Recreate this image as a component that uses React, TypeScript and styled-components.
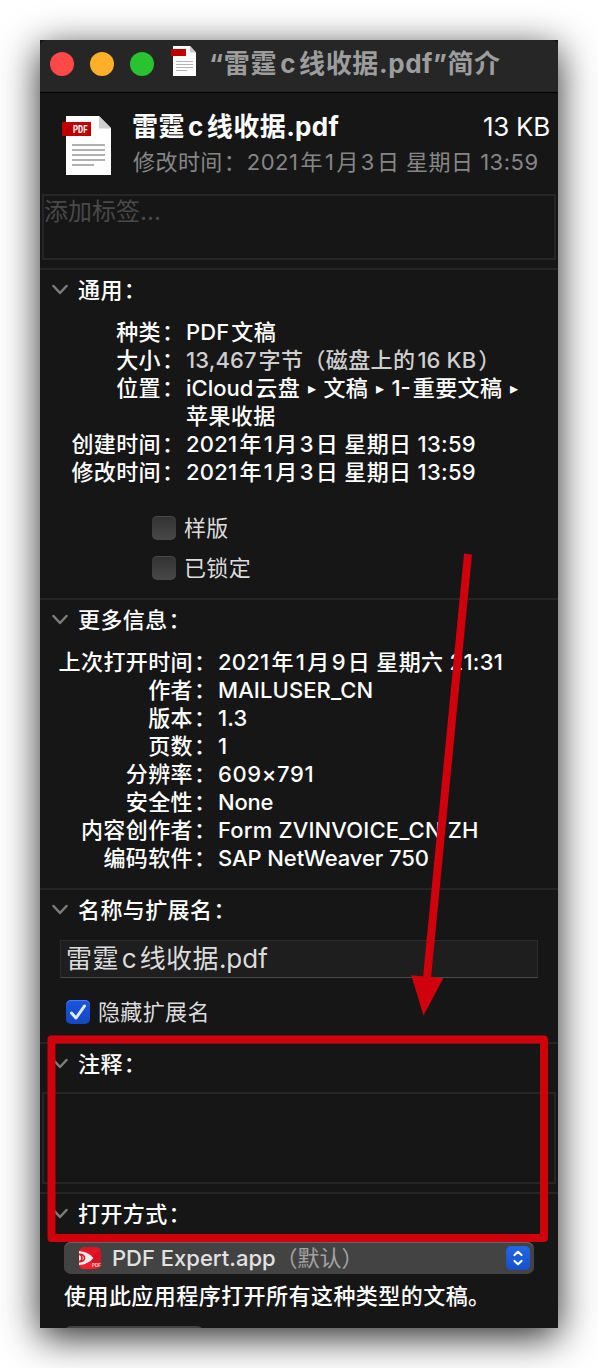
import React from "react";
import styled, { createGlobalStyle } from "styled-components";

const Global = createGlobalStyle`
  * { box-sizing: border-box; }
  body { margin: 0; background: #fff; }
`;

const Page = styled.div`
  position: relative;
  width: 598px;
  height: 1368px;
  padding: 40px;
  overflow: hidden;
  font-family: Inter, "Noto Sans CJK SC", sans-serif;
  font-size: 22px;
  line-height: 28px;
  color: #fff;
`;

const Window = styled.main`
  width: 518px;
  height: 1288px;
  background: #161616;
  box-shadow: 0 9px 36px rgba(0, 0, 0, 0.85);
`;

const Clip = styled.div`
  height: 100%;
  overflow: hidden;
`;

const TitleBar = styled.header`
  display: flex;
  align-items: flex-start;
  height: 53px;
  background: #262626;
  border-bottom: 1px solid #000;
  border-radius: 6px 6px 0 0;
`;

const Lights = styled.div`
  display: flex;
  gap: 16px;
  padding: 12px 0 0 10px;
`;

const Light = styled.span<{ $color: string }>`
  width: 24px;
  height: 24px;
  border-radius: 50%;
  background: ${(p) => p.$color};
`;

const SmallDoc = styled.svg`
  margin: 6px 0 0 17px;
  flex: none;
`;

const Title = styled.h1`
  margin: 10px 0 0 12px;
  font-size: 26px;
  line-height: 28px;
  font-weight: 700;
  color: #9d9d9d;
  white-space: nowrap;
`;

const Summary = styled.section`
  display: flex;
  height: 101px;
  padding: 19px 8px 0 22px;
`;

const SummaryText = styled.div`
  flex: 1;
  margin-left: 20px;
`;

const SummaryTop = styled.div`
  display: flex;
  justify-content: space-between;
  font-size: 26px;
  line-height: 30px;
  height: 36px;
`;

const FileName = styled.strong`
  font-weight: 700;
`;

const Modified = styled.div`
  padding-left: 1px;
  color: #868686;
  white-space: nowrap;
`;

const Box = styled.div<{ $h: number }>`
  height: ${(p) => p.$h}px;
  margin: 0 2px 8px;
  border: 2px solid #262626;
  font-size: 24px;
  line-height: 32px;
  color: #494949;
`;

const Section = styled.section<{ $h?: number }>`
  height: ${(p) => (p.$h ? p.$h + "px" : "auto")};
  border-top: 2px solid #252525;
`;

const Heading = styled.h2`
  display: flex;
  align-items: center;
  gap: 10px;
  height: 40px;
  margin: 0;
  padding-left: 12px;
  font-size: 22px;
  font-weight: 500;
  white-space: nowrap;
`;

const Rows = styled.dl<{ $label: number }>`
  display: grid;
  grid-template-columns: ${(p) => p.$label}px 1fr;
  column-gap: 3px;
  margin: 8px 0 0;
  white-space: nowrap;
`;

const Label = styled.dt`
  text-align: right;
  font-weight: 500;
`;

const Value = styled.dd<{ $dim?: boolean }>`
  margin: 0;
  font-weight: 500;
  color: ${(p) => (p.$dim ? "#cfcfcf" : "#fff")};
`;

const Run = styled.span<{ $ls: number; $l: number; $r: number }>`
  letter-spacing: ${(p) => p.$ls}px;
  margin-left: ${(p) => p.$l}px;
  margin-right: ${(p) => p.$r}px;
`;

const Colon = styled.span`
  margin: 0 -1px 0 1px;
`;

const Arrow = styled.span`
  display: inline-block;
  width: 11.5px;
  font-size: 16px;
  line-height: 20px;
  text-align: center;
  vertical-align: 2px;
`;

const Checks = styled.div<{ $left: number; $top: number }>`
  display: grid;
  gap: 16px;
  padding: ${(p) => p.$top}px 0 0 ${(p) => p.$left}px;
`;

const Check = styled.label`
  display: flex;
  align-items: center;
  gap: 8px;
  height: 24px;
  color: #dcdcdc;
  letter-spacing: 0.35px;
`;

const Tick = styled.span<{ $on?: boolean }>`
  display: flex;
  width: 24px;
  height: 24px;
  border-radius: 5px;
  background: ${(p) => (p.$on ? "linear-gradient(#1a56e0, #1447c4)" : "linear-gradient(#323232, #484848)")};
  box-shadow: inset 0 1px 0 ${(p) => (p.$on ? "#4a7cf0" : "#484848")};
`;

const NameField = styled.div`
  height: 38px;
  margin: 10px 20px 0;
  padding-left: 5px;
  background: #1e1e1e;
  border: 1px solid #2c2c2c;
  border-bottom-color: #4a4a4a;
  font-size: 26px;
  line-height: 36px;
  color: #dcdcdc;
`;

const Popup = styled.div`
  display: flex;
  align-items: center;
  height: 32px;
  margin: 8px 24px 0;
  padding: 0 4px 0 14px;
  border-radius: 7px;
  background: #434343;
  box-shadow: inset 0 1px 0 #666;
  color: #e2e2e2;
  font-weight: 500;
  white-space: nowrap;
`;

const Default = styled.span`
  color: #a4a4a4;
  font-weight: 400;
`;

const AppName = styled.span`
  margin-left: 10px;
`;

const Stepper = styled.span`
  display: flex;
  width: 24px;
  height: 24px;
  margin-left: auto;
  border-radius: 5px;
  background: linear-gradient(#2366e4, #1552cc);
`;

const Hint = styled.p`
  margin: 8px 0 0 24px;
  font-weight: 500;
`;

const Comments = styled.div`
  padding-top: 8px;
`;

const AllButton = styled.div`
  width: 140px;
  height: 30px;
  margin: 16px 0 0 24px;
  border-radius: 7px;
  background: #434343;
`;

const Marks = styled.svg`
  position: absolute;
  left: 0;
  top: 0;
`;

/* Sets Latin runs apart from the ideographs next to them. */
function Mixed({ text, cjk = 0.4, latin = 0.1, gap = 2 }: { text: string; cjk?: number; latin?: number; gap?: number }) {
  const parts = text.match(/[\x20-\x7e×]+|：|▸|[“”]|[^\x20-\x7e×：▸“”]+/g) || [];
  return (
    <>
      {parts.map((part, i) => {
        if (part === "：") return <Colon key={i}>{part}</Colon>;
        if (part === "▸") return <Arrow key={i}>{part}</Arrow>;
        const isLatin = /^[\x20-\x7e×]/.test(part);
        const next = parts[i + 1];
        return (
          <Run
            key={i}
            $ls={isLatin ? latin : cjk}
            $l={!isLatin || i === 0 || /^[ .]/.test(part) ? 0 : gap}
            $r={!isLatin || !next || next === "”" || part.endsWith(" ") ? 0 : gap}
          >
            {part}
          </Run>
        );
      })}
    </>
  );
}

function Chevron() {
  return (
    <svg width="16" height="12" viewBox="0 0 16 12" fill="none">
      <path d="M1.500 2 8 9 14.500 2" stroke="#7c7c7c" strokeWidth="2.500" strokeLinecap="round" strokeLinejoin="round" />
    </svg>
  );
}

function Caption({ children }: { children: string }) {
  return (
    <Heading>
      <Chevron />
      <span>
        <Mixed text={children} />
      </span>
    </Heading>
  );
}

function Fields({ label, items }: { label: number; items: [string, string, number?, boolean?][] }) {
  return (
    <Rows $label={label}>
      {items.map(([name, value, latin, dim], i) => (
        <React.Fragment key={i}>
          <Label>
            <Mixed text={name} />
          </Label>
          <Value $dim={dim}>
            <Mixed text={value} latin={latin ?? 0.1} />
          </Value>
        </React.Fragment>
      ))}
    </Rows>
  );
}

export default function App() {
  return (
    <Page>
      <Global />
      <Window>
        <Clip>
          <TitleBar>
            <Lights>
              <Light $color="#ff4947" />
              <Light $color="#ffb02a" />
              <Light $color="#29c231" />
            </Lights>
            <SmallDoc width="26" height="31" viewBox="0 0 26 31">
              <path d="M2 0H19L25 6.500V30H2Z" fill="#fff" />
              <path d="M19 0V6.500H25Z" fill="#c9c9c9" />
              <rect x="0" y="3" width="15" height="7" fill="#c00000" />
              <path d="M5 15.500H22M5 18.500H22M5 21.500H22M5 24.500H16" stroke="#b4b4b4" />
            </SmallDoc>
            <Title>
              <Mixed text="“雷霆c线收据.pdf”简介" cjk={0.7} latin={0.5} gap={3} />
            </Title>
          </TitleBar>

          <Summary>
            <svg width="50" height="64" viewBox="0 0 50 64">
              <path d="M4 4H37L49 16V63H4Z" fill="#fff" />
              <path d="M37 4V16.500H49Z" fill="#cfcfcf" />
              <rect x="0" y="10" width="29" height="14" fill="#c00000" />
              <text x="11" y="21" fill="#fff" fontFamily="Roboto, sans-serif" fontSize="11" fontWeight="700" textLength="14.500" lengthAdjust="spacingAndGlyphs">PDF</text>
              <path d="M10 33H43M10 38H43M10 43H43M10 48H43M10 53H32" stroke="#b0b0b0" strokeWidth="2" />
            </svg>
            <SummaryText>
              <SummaryTop>
                <FileName>
                  <Mixed text="雷霆c线收据.pdf" cjk={0.5} latin={0.3} gap={3} />
                </FileName>
                <Mixed text="13 KB" latin={-0.3} />
              </SummaryTop>
              <Modified>
                <Mixed text="修改时间：2021年1月3日 星期日 13:59" latin={0.5} cjk={0.45} />
              </Modified>
            </SummaryText>
          </Summary>
          <Box $h={66}>
            <Mixed text="添加标签..." gap={1} cjk={0} />
          </Box>

          <Section $h={330}>
            <Caption>通用：</Caption>
            <Fields
              label={143}
              items={[
                ["种类：", "PDF文稿"],
                ["大小：", "13,467字节（磁盘上的16 KB）", 0.1, true],
                ["位置：", "iCloud云盘 ▸ 文稿 ▸ 1-重要文稿 ▸", 0],
                ["", "苹果收据"],
                ["创建时间：", "2021年1月3日 星期日 13:59", 0.25],
                ["修改时间：", "2021年1月3日 星期日 13:59", 0.25],
              ]}
            />
            <Checks $left={112} $top={30}>
              <Check><Tick />样版</Check>
              <Check><Tick />已锁定</Check>
            </Checks>
          </Section>

          <Section $h={290}>
            <Caption>更多信息：</Caption>
            <Fields
              label={175}
              items={[
                ["上次打开时间：", "2021年1月9日 星期六 21:31", 0.25],
                ["作者：", "MAILUSER_CN"],
                ["版本：", "1.3"],
                ["页数：", "1"],
                ["分辨率：", "609×791", 0.6],
                ["安全性：", "None", -0.2],
                ["内容创作者：", "Form ZVINVOICE_CN ZH", 0.15],
                ["编码软件：", "SAP NetWeaver 750", -0.1],
              ]}
            />
          </Section>

          <Section $h={154}>
            <Caption>名称与扩展名：</Caption>
            <NameField>
              <Mixed text="雷霆c线收据.pdf" cjk={0.4} gap={3} latin={0} />
            </NameField>
            <Checks $left={26} $top={22}>
              <Check>
                <Tick $on>
                  <svg width="24" height="24" viewBox="0 0 24 24" fill="none">
                    <path d="M5.500 13 10 18 18.500 6" stroke="#e4ebff" strokeWidth="3" strokeLinecap="round" strokeLinejoin="round" />
                  </svg>
                </Tick>
                隐藏扩展名
              </Check>
            </Checks>
          </Section>

          <Section $h={150}>
            <Caption>注释：</Caption>
            <Comments>
              <Box $h={92} />
            </Comments>
          </Section>

          <Section>
            <Caption>打开方式：</Caption>
            <Popup>
              <svg width="24" height="24" viewBox="0 0 24 24">
                <defs>
                  <linearGradient id="app" x1="0" y1="0" x2="0" y2="1">
                    <stop offset="0" stopColor="#e01222" />
                    <stop offset="1" stopColor="#fb1f2d" />
                  </linearGradient>
                </defs>
                <rect x="1" y="1" width="22" height="22" rx="5" fill="url(#app)" />
                <path d="M12 12 23 3V18Q23 23 18 23Z" fill="#c40818" opacity=".5" />
                <path d="M1 5Q10 5.500 15.500 12Q10 18.500 1 19Z" fill="#f4eeee" />
                <path d="M1 8.200A3.900 3.900 0 0 1 1 15.800M1 8.200Q6.500 8 6.500 12T1 15.800" fill="none" stroke="#e01826" strokeWidth="1.600" />
                <text x="14" y="20.500" fill="#ffd9dc" fontSize="4.500" fontWeight="700" fontFamily="Inter, sans-serif">PDF</text>
              </svg>
              <AppName>
                <Mixed text="PDF Expert.app" latin={0} />
              </AppName>
              <Default>（默认）</Default>
              <Stepper>
                <svg width="24" height="24" viewBox="0 0 24 24" fill="none" stroke="#fff" strokeWidth="2.200" strokeLinecap="round" strokeLinejoin="round">
                  <path d="M8.500 9 12 5.800 15.500 9M8.500 15 12 18.200 15.500 15" />
                </svg>
              </Stepper>
            </Popup>
            <Hint>
              <Mixed text="使用此应用程序打开所有这种类型的文稿。" cjk={0.45} />
            </Hint>
            <AllButton />
          </Section>
        </Clip>
      </Window>

      <Marks width="598" height="1368" viewBox="0 0 598 1368">
        <path d="M468 554 427 978" stroke="#d0000d" strokeWidth="8" />
        <path d="M411.300 975.300 443.300 978.300 423.500 1015.500Z" fill="#d0000d" />
        <rect x="51.500" y="1039.500" width="492.500" height="198.500" fill="none" stroke="#d0000d" strokeWidth="8" strokeLinejoin="round" />
      </Marks>
    </Page>
  );
}
